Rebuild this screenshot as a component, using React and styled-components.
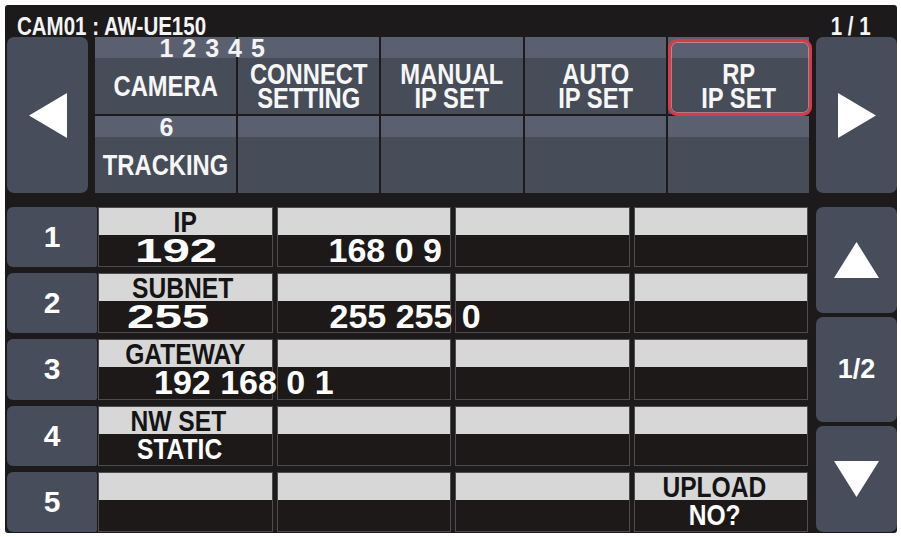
import React from 'react'
import styled, { createGlobalStyle } from 'styled-components';

const GlobalStyle = createGlobalStyle`
    body {
        margin: 0;
        background: #ffffff;
        font-family: "Liberation Sans", Arial, sans-serif;
    }
`

const PANEL = '#474d5a';

//styled Components
const Screen = styled.div`
    margin: 5px 0 0 5px;
    width: 892px;
    height: 528px;
    box-sizing: border-box;
    padding-left: 2px;
    background-color: #1c1a1b;
    border-radius: 3px;
    display: flex;
    flex-direction: column;
`
// the panel uses a condensed face: squeeze Liberation Sans to that width
const Narrow = styled.span`
    display: inline-block;
    white-space: pre-line;
    text-align: center;
    transform: scaleX(0.82);
    transform-origin: ${p => p.$origin || 'center'} center;
    position: relative;
    z-index: 1;
`
const Header = styled.div`
    height: 32px;
    box-sizing: border-box;
    padding: 10px 26px 0 10px;
    display: flex;
    justify-content: space-between;
    color: #f4f4f4;
    font: bold 25px/22px "Liberation Sans", sans-serif;
`
const TopPanel = styled.div`
    height: 156px;
    display: grid;
    grid-template-columns: 81px 715px 81px;
    column-gap: 6.5px;
`
const ArrowButton = styled.div`
    background-color: ${PANEL};
    border-radius: 7px;
    display: flex;
    align-items: center;
    justify-content: center;
    color: #fff;
    font: bold 27px/1 "Liberation Sans", sans-serif;
`
const TabGrid = styled.div`
    display: grid;
    grid-template-columns: repeat(5, minmax(0, 1fr));
    grid-template-rows: repeat(2, minmax(0, 1fr));
    gap: 2px;
`
const Tab = styled.div`
    position: relative;
    display: flex;
    flex-direction: column;
    min-width: 0;
    background-color: #464c58;
`
const TabStrip = styled.div`
    height: 21px;
    flex: none;
    background-color: #5a6070;
    padding-left: 65px;
    color: #f4f4f4;
    font: bold 25px/22px "Liberation Sans", sans-serif;
    letter-spacing: 1px;
    white-space: nowrap;
`
const StripText = styled.span`
    position: relative;
    z-index: 1;
`
const TabLabel = styled.div`
    flex: 1;
    display: flex;
    align-items: center;
    justify-content: center;
    color: #f6f6f6;
    font: bold 29px/24px "Liberation Sans", sans-serif;
    white-space: nowrap;
`
const Highlight = styled.div`
    position: absolute;
    inset: 2px -3px -2px 0;
    border: 3px solid #d73a4b;
    border-radius: 9px;
    box-shadow: inset 0 0 0 1px rgba(255, 170, 180, 0.55);
    pointer-events: none;
`
const BottomPanel = styled.div`
    margin-top: 14px;
    height: 325px;
    display: flex;
    gap: 8px;
`
const Rows = styled.div`
    width: 801px;
    display: grid;
    grid-template-columns: 90px 710px;
    grid-template-rows: repeat(5, minmax(0, 1fr));
    column-gap: 1px;
    row-gap: 6px;
`
const NumCell = styled.div`
    background-color: ${PANEL};
    border-radius: 6px 2px 2px 6px;
    display: flex;
    align-items: center;
    justify-content: center;
    color: #fff;
    font: bold 30px/1 "Liberation Sans", sans-serif;
`
const DataRow = styled.div`
    display: grid;
    grid-template-columns: repeat(4, minmax(0, 1fr));
    gap: 4px;
`
const DataCell = styled.div`
    display: grid;
    grid-template-columns: minmax(0, 1fr);
    grid-template-rows: 27px 1fr;
    min-width: 0;
    border: 1px solid #4e4c4e;
    background-color: #1d1919;
`
const LabelBand = styled.div`
    background-color: #d7d7d7;
    color: #141414;
    text-align: center;
    padding-right: ${p => p.$shift || 0}px;
    font: bold 30px/27px "Liberation Sans", sans-serif;
    white-space: nowrap;
`
const ValueBand = styled.div`
    padding-left: ${p => p.$pad || 0}px;
    padding-right: ${p => p.$shift || 0}px;
    text-align: ${p => (p.$pad == null ? 'center' : 'left')};
    color: #ffffff;
    font: bold ${p => (p.$word ? '30px' : '34px')}/30px "Liberation Sans", sans-serif;
    white-space: nowrap;
`
const ValueText = styled.span`
    position: relative;
    z-index: 1;
    display: inline-block;
    transform: ${p => (p.$wide ? 'scaleX(1.45)' : 'none')};
    transform-origin: left center;
`
const SideColumn = styled.div`
    width: 81px;
    display: grid;
    grid-template-rows: repeat(3, minmax(0, 1fr));
    gap: 4px;
`

const Triangle = ({ dir }) => {
  const points = {
    left: '38,0 38,45 0,22.5',
    right: '0,0 0,45 38,22.5',
    up: '22.5,0 45,36 0,36',
    down: '0,0 45,0 22.5,36',
  }[dir];
  const horizontal = dir === 'left' || dir === 'right';
  const w = horizontal ? 38 : 45;
  const h = horizontal ? 45 : 36;
  return (
    <svg width={w} height={h} viewBox={`0 0 ${w} ${h}`}>
      <polygon points={points} fill="#ffffff" />
    </svg>
  );
};

const tabs = [
  { strip: '1 2 3 4 5', label: 'CAMERA' },
  { label: 'CONNECT\nSETTING' },
  { label: 'MANUAL\nIP SET' },
  { label: 'AUTO\nIP SET' },
  { label: 'RP\nIP SET', active: true },
  { strip: '6', label: 'TRACKING' },
  {}, {}, {}, {},
];

const rows = [
  { cells: [{ label: 'IP', value: '192', pad: 36, wide: true }, { value: '168 0 9', pad: 51 }, {}, {}] },
  { cells: [{ label: 'SUBNET', shift: 6, value: '255', pad: 28, wide: true }, { value: '255 255 0', pad: 52 }, {}, {}] },
  { cells: [{ label: 'GATEWAY', value: '192 168 0 1', pad: 55 }, {}, {}, {}] },
  { cells: [{ label: 'NW SET', shift: 14, value: 'STATIC', pad: 38, word: true }, {}, {}, {}] },
  { cells: [{}, {}, {}, { label: 'UPLOAD', shift: 13, value: 'NO?', shift2: 13, word: true }] },
];

const App = () => {
  return (
    <>
      <GlobalStyle />
      <Screen>
        <Header>
          <Narrow $origin="left">CAM01 : AW-UE150</Narrow>
          <Narrow $origin="right">1 / 1</Narrow>
        </Header>
        <TopPanel>
          <ArrowButton><Triangle dir="left" /></ArrowButton>
          <TabGrid>
            {tabs.map((t, i) => (
              <Tab key={i}>
                <TabStrip>{t.strip && <StripText>{t.strip}</StripText>}</TabStrip>
                <TabLabel>{t.label && <Narrow>{t.label}</Narrow>}</TabLabel>
                {t.active && <Highlight />}
              </Tab>
            ))}
          </TabGrid>
          <ArrowButton><Triangle dir="right" /></ArrowButton>
        </TopPanel>
        <BottomPanel>
          <Rows>
            {rows.map((r, i) => (
              <React.Fragment key={i}>
                <NumCell>{i + 1}</NumCell>
                <DataRow>
                  {r.cells.map((c, j) => (
                    <DataCell key={j}>
                      <LabelBand $shift={c.shift}>{c.label && <Narrow>{c.label}</Narrow>}</LabelBand>
                      <ValueBand $pad={c.pad} $shift={c.shift2} $word={c.word}>
                        {c.value && (c.word
                          ? <Narrow $origin={c.pad == null ? 'center' : 'left'}>{c.value}</Narrow>
                          : <ValueText $wide={c.wide}>{c.value}</ValueText>)}
                      </ValueBand>
                    </DataCell>
                  ))}
                </DataRow>
              </React.Fragment>
            ))}
          </Rows>
          <SideColumn>
            <ArrowButton><Triangle dir="up" /></ArrowButton>
            <ArrowButton>1/2</ArrowButton>
            <ArrowButton><Triangle dir="down" /></ArrowButton>
          </SideColumn>
        </BottomPanel>
      </Screen>
    </>
  )
}

export default App
